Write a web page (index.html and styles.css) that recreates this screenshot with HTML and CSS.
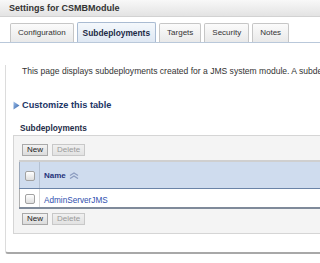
FILE: index.html
```html
<!DOCTYPE html>
<html>
<head>
<meta charset="utf-8">
<link rel="stylesheet" href="styles.css">
</head>
<body>
<div class="title">Settings for CSMBModule</div>
<div class="tabs">
  <div class="tab">Configuration</div>
  <div class="tab active">Subdeployments</div>
  <div class="tab">Targets</div>
  <div class="tab">Security</div>
  <div class="tab">Notes</div>
</div>
<div class="panel">
  <p class="intro">This page displays subdeployments created for a JMS system module. A subdeployment is a mechanism by which JMS module resources are grouped and targeted.</p>
  <div class="customize">
    <svg class="tri" width="7" height="9" viewBox="0 0 7 9">
      <defs><linearGradient id="g" x1="0" y1="0" x2="1" y2="1"><stop offset="0" stop-color="#9fc0ea"/><stop offset="1" stop-color="#2f5fa8"/></linearGradient></defs>
      <path d="M0.5 0.5 L6.5 4.5 L0.5 8.5 Z" fill="url(#g)"/>
    </svg>
    <span>Customize this table</span>
  </div>
  <div class="heading">Subdeployments</div>
  <div class="box">
    <div class="btnbar top"><button class="btn">New</button><button class="btn off">Delete</button></div>
    <table class="grid">
      <tr class="head">
        <th class="cb"><span class="check"></span></th>
        <th class="name">Name <svg class="sort" width="10" height="7" viewBox="0 0 10 7"><path d="M1 3.6 L5 0.9 L9 3.6 M1 6.6 L5 3.9 L9 6.6" stroke="#8c9cc0" stroke-width="1.2" fill="none"/></svg></th>
      </tr>
      <tr class="row">
        <td class="cb"><span class="check"></span></td>
        <td class="name"><a class="link">AdminServerJMS</a></td>
      </tr>
    </table>
    <div class="btnbar bottom"><button class="btn">New</button><button class="btn off">Delete</button></div>
  </div>
</div>
</body>
</html>
```
FILE: styles.css
```css
html, body {
  margin: 0;
  padding: 0;
  background: #fff;
}
body {
  width: 320px;
  height: 263px;
  overflow: hidden;
  font-family: "Liberation Sans", Arial, sans-serif;
  color: #333;
}
.title {
  height: 16px;
  line-height: 17px;
  padding-left: 9px;
  font-size: 9px;
  font-weight: bold;
  color: #333;
  background: linear-gradient(#f8f8f8, #e3e3e3);
  border-bottom: 1px solid #d2d2d2;
}
.tabs {
  margin-top: 5px;
  height: 20px;
  padding-left: 10px;
  display: flex;
  align-items: flex-end;
  gap: 3px;
  border-bottom: 1px solid #b9c8da;
}
.tab {
  height: 18px;
  line-height: 18px;
  padding: 0 7px;
  font-size: 8px;
  color: #333;
  background: linear-gradient(#fbfbfb, #e9e9e9);
  border: 1px solid #c6c6c6;
  border-bottom: none;
  border-radius: 2px 2px 0 0;
  white-space: nowrap;
}
.tab.active {
  height: 19px;
  line-height: 20px;
  padding: 0 5px;
  font-weight: bold;
  font-size: 8.4px;
  color: #1d2b46;
  background: linear-gradient(#f4f8fc, #dfe8f3);
  border-color: #a9bbd2;
}
.panel {
  margin-left: 5px;
  width: 400px;
  border-left: 1px solid #dcdcdc;
  border-bottom: 2px solid #a8a8a8;
  border-bottom-left-radius: 3px;
  padding-bottom: 18px;
}
.intro {
  margin: 22px 0 0 0;
  padding-left: 16px;
  font-size: 8.55px;
  line-height: 12px;
  white-space: nowrap;
  overflow: hidden;
  width: 298px;
  color: #333;
}
.customize {
  margin-top: 22px;
  padding-left: 7px;
  height: 12px;
  display: flex;
  align-items: center;
  gap: 2px;
  font-size: 9.2px;
  font-weight: bold;
  color: #1b3566;
}
.heading {
  margin-top: 11px;
  padding-left: 14px;
  line-height: 12px;
  font-size: 8.3px;
  font-weight: bold;
  color: #1f2d48;
}
.box {
  margin: 1px 0 0 7px;
  border: 1px solid #d5d5d5;
  border-right: none;
  background: #f4f4f4;
}
.btnbar {
  height: 24px;
  display: flex;
  align-items: flex-start;
  gap: 4px;
  padding-left: 8px;
  box-sizing: border-box;
}
.btnbar.top {
  padding-top: 8px;
}
.btnbar.bottom {
  padding-top: 4px;
}
.btn {
  height: 12px;
  padding: 0 4px;
  margin: 0;
  font-family: "Liberation Sans", Arial, sans-serif;
  font-size: 8px;
  line-height: 10px;
  color: #222;
  background: linear-gradient(#f2f2f2, #dcdcdc);
  border: 1px solid #a9a9a9;
  border-radius: 0;
}
.btn.off {
  color: #9a9a9a;
  border-color: #c8c8c8;
  background: linear-gradient(#f0f0f0, #e2e2e2);
}
.grid {
  margin-left: 5px;
  width: 376px;
  border-collapse: collapse;
  border-spacing: 0;
}
.grid th, .grid td {
  padding: 0;
  text-align: left;
}
.head th {
  height: 26px;
  background: #cfdcee;
  border-top: 2px solid #cfcfcf;
  border-bottom: 1px solid #6b84a7;
}
.row td {
  height: 17px;
  background: #fff;
  border-bottom: 2px solid #7f8a9a;
}
.cb {
  width: 19px;
  border-left: 1px solid #9eaabb;
  border-right: 1px solid #b4c1d3;
  text-align: center;
}
.row .cb {
  border-right-color: #dadada;
  border-left-color: #b0b0b0;
}
.grid .cb {
  text-align: center;
}
.check {
  display: inline-block;
  width: 8px;
  height: 8px;
  border: 1px solid #a2a2a2;
  border-radius: 2px;
  background: linear-gradient(#ffffff, #dedede);
  vertical-align: middle;
  margin-left: 1px;
}
.name {
  padding-left: 4px !important;
}
.head .name {
  font-size: 8px;
  font-weight: bold;
  color: #25337a;
}
.sort {
  vertical-align: -1px;
  margin-left: 1px;
}
.link {
  font-size: 8.2px;
  color: #2f4fae;
}
```
